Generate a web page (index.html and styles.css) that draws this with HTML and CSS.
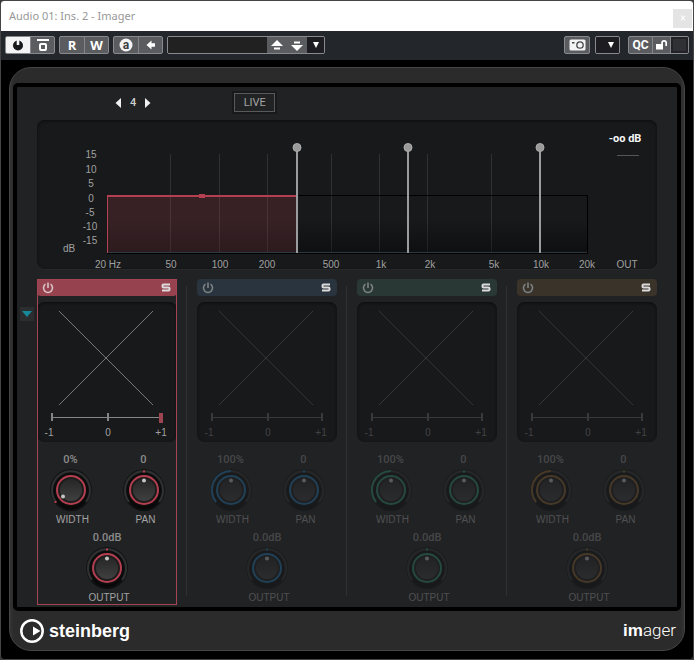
FILE: index.html
```html
<!DOCTYPE html>
<html lang="en">
<head>
<meta charset="utf-8">
<title>Audio 01: Ins. 2 - Imager</title>
<link rel="stylesheet" href="styles.css">
</head>
<body>
<div class="window">
  <header class="titlebar">
    <h1>Audio 01: Ins. 2 - Imager</h1>
    <button class="close" aria-label="Close"><svg width="8" height="8" viewBox="0 0 8 8"><path d="M2 1.500l4 5M6 1.500l-4 5" stroke="#fff" stroke-width="1.200"/></svg></button>
  </header>

  <div class="toolbar">
    <div class="group">
      <button class="tool on" aria-label="Activate"><svg width="14" height="14" viewBox="0 0 14 14"><circle cx="7" cy="7.500" r="5" fill="#17181a"/><path d="M7 0v7" stroke="#f4f4f4" stroke-width="2.600"/></svg></button>
      <button class="tool" aria-label="Bypass"><svg width="14" height="14" viewBox="0 0 14 14"><path d="M1 2h12" stroke="#fff" stroke-width="2"/><rect x="4" y="6" width="6" height="6" rx="1" fill="none" stroke="#fff" stroke-width="2"/></svg></button>
    </div>
    <div class="group">
      <button class="tool">R</button>
      <button class="tool">W</button>
    </div>
    <div class="group">
      <button class="tool" aria-label="Switch A/B"><svg width="14" height="14" viewBox="0 0 14 14"><circle cx="7" cy="7" r="6.500" fill="#f4f4f4"/><text x="7" y="11" class="ab">a</text></svg></button>
      <button class="tool" aria-label="Copy A to B"><svg width="12" height="12" viewBox="0 0 12 12"><path d="M1.500 6l5-4.500v2.700h3.500v3.600h-3.500v2.700z" fill="#fff"/></svg></button>
    </div>
    <div class="group preset">
      <input type="text" class="preset-name" aria-label="Preset">
      <button class="tool step" aria-label="Previous preset"><svg width="12" height="12" viewBox="0 0 12 12"><path d="M0 7l6-6 6 6z" fill="#fff"/><path d="M3 9.500h6" stroke="#fff" stroke-width="2"/></svg></button>
      <button class="tool step" aria-label="Next preset"><svg width="12" height="12" viewBox="0 0 12 12"><path d="M0 6l6 6 6-6z" fill="#fff"/><path d="M3 3.500h6" stroke="#fff" stroke-width="2"/></svg></button>
      <label class="drop small"><select aria-label="Preset menu"><option></option></select><svg width="8" height="8" viewBox="0 0 8 8"><path d="M1 1h6l-3 6z" fill="#fff"/></svg></label>
    </div>
    <span class="spacer"></span>
    <div class="group camera">
      <button class="tool" aria-label="Snapshot"><svg width="17" height="12" viewBox="0 0 17 12"><rect x="0.500" y="0.500" width="16" height="11" rx="1.500" fill="#f4f4f4"/><rect x="3" y="3" width="2.500" height="1.500" fill="#44464a"/><circle cx="11" cy="6" r="3.200" fill="none" stroke="#44464a" stroke-width="1.300"/></svg></button>
    </div>
    <div class="group functions">
      <label class="drop"><select aria-label="Functions"><option></option></select><svg width="8" height="8" viewBox="0 0 8 8"><path d="M1 1h6l-3 6z" fill="#fff"/></svg></label>
    </div>
    <div class="group">
      <button class="tool qc">QC</button>
      <button class="tool lock" aria-label="Unlock"><svg width="13" height="12" viewBox="0 0 13 12"><rect x="1" y="5" width="7" height="5.500" fill="#fff"/><path d="M7 5.500V4a2 2 0 0 1 4.200 0v3" fill="none" stroke="#fff" stroke-width="1.700"/></svg></button>
      <button class="tool blank" aria-label="Target"><span></span></button>
    </div>
  </div>

  <main class="shell">
    <div class="screen">
      <div class="controls">
        <div class="stepper">
          <button aria-label="Fewer bands"><svg width="6" height="10" viewBox="0 0 6 10"><path d="M6 0v10L0.500 5z" fill="#f0f0f0"/></svg></button>
          <output>4</output>
          <button aria-label="More bands"><svg width="6" height="10" viewBox="0 0 6 10"><path d="M0 0v10l5.500-5z" fill="#f0f0f0"/></svg></button>
        </div>
        <button class="live">LIVE</button>
      </div>

      <section class="spectrum" aria-label="Frequency bands">
        <svg viewBox="0 0 620 149">
          <defs>
            <linearGradient id="floor" x1="0" y1="0" x2="0" y2="1"><stop offset=".4" stop-color="#000" stop-opacity="0"/><stop offset="1" stop-color="#000" stop-opacity=".4"/></linearGradient>
          </defs>
          <path d="M133.500 34v99M182.500 34v99M230.500 34v99M294.500 34v99M342.500 34v99M390.500 34v99M454.500 34v99" stroke="#303133"/>
          <rect x="70" y="76" width="190" height="57" fill="#b54050" fill-opacity=".2"/>
          <rect x="70" y="76" width="190" height="57" fill="url(#floor)" opacity=".5"/>
          <rect x="260" y="76" width="290" height="57" fill="url(#floor)"/>
          <path d="M260 75.500h290.500v58" fill="none" stroke="#000"/>
          <path d="M70 133.500h481" stroke="#000"/>
          <path d="M70 132.500h480" stroke="#2c3842"/>
          <path d="M70.500 133v-58" stroke="#b04354"/>
          <path d="M70 76h190" stroke="#b43f50" stroke-width="2"/>
          <rect x="162" y="74" width="6" height="4" fill="#b43f50"/>
          <g stroke="#9c9c9c" stroke-width="2"><path d="M260 30v103M371 30v103M503 30v103"/></g>
          <g fill="#9a9a9a" stroke="#adadad"><circle cx="260" cy="27.500" r="4"/><circle cx="371" cy="27.500" r="4"/><circle cx="503" cy="27.500" r="4"/></g>
          <g class="axis">
            <text x="54" y="38">15</text><text x="54" y="53">10</text><text x="54" y="67">5</text><text x="54" y="82">0</text><text x="53" y="96">-5</text><text x="53" y="110">-10</text><text x="53" y="124">-15</text>
            <text x="32" y="132">dB</text>
            <text x="71" y="148">20 Hz</text><text x="134" y="148">50</text><text x="183" y="148">100</text><text x="230" y="148">200</text><text x="294" y="148">500</text><text x="344" y="148">1k</text><text x="393" y="148">2k</text><text x="457" y="148">5k</text><text x="504" y="148">10k</text><text x="550" y="148">20k</text><text x="590" y="148">OUT</text>
          </g>
          <text x="588" y="22" class="peak">-oo dB</text>
          <path d="M580 35.500h22" stroke="#555"/>
        </svg>
      </section>

      <div class="mixer">
        <button class="fold" aria-label="Toggle scopes"><svg width="10" height="6" viewBox="0 0 10 6"><path d="M0 0h10L5 6z" fill="#16899b"/></svg></button>
        <div class="bands" id="bands"></div>
      </div>
    </div>

    <footer class="brand">
      <div class="maker">
        <svg width="24" height="24" viewBox="0 0 24 24"><circle cx="12" cy="12" r="10.700" fill="none" stroke="#fff" stroke-width="2.500"/><path d="M13 7.500v9l7.500-4.500z" fill="#fff"/></svg>
        <span>steinberg</span>
      </div>
      <div class="product"><b>im</b>ager</div>
    </footer>
  </main>
</div>

<svg class="defs" aria-hidden="true">
  <defs>
    <radialGradient id="halo"><stop offset=".7" stop-color="#000" stop-opacity=".9"/><stop offset="1" stop-color="#000" stop-opacity="0"/></radialGradient>
    <linearGradient id="face" x1="0" y1="0" x2="0" y2="1"><stop offset="0" stop-color="#262626"/><stop offset="1" stop-color="#404040"/></linearGradient>
  </defs>
</svg>
<script src="bands.js"></script>
</body>
</html>
```
FILE: styles.css
```css
* { box-sizing: border-box; }
body { margin: 0; background: #3c3c3c; font-family: "Liberation Sans", Arial, sans-serif; font-size: 10px; line-height: 12px; color: #a3a3a3; }
button, input, select { font: inherit; color: inherit; margin: 0; padding: 0; border: 0; background: none; }
button { display: flex; align-items: center; justify-content: center; }
svg { display: block; }
.defs { position: absolute; width: 0; height: 0; }

.window { min-height: 100vh; padding-bottom: 7px; background: #000; border: 1px solid #454545; border-radius: 4px; overflow: hidden; }
.titlebar { display: flex; align-items: center; justify-content: space-between; height: 30px; padding: 0 1px 0 8px; background: #fff; }
.titlebar h1 { margin: 0; font: 400 11px/14px "Noto Sans", "Open Sans", sans-serif; color: #989898; }
.close { width: 19px; height: 19px; margin-top: 4px; background: #e4e4e4; }

.toolbar { display: flex; align-items: flex-start; gap: 4px; height: 29px; padding: 5px 4px 0; background: #23272b; }
.group { display: flex; height: 18px; border: 1px solid #88898c; border-radius: 2px; background: #5b5c60; overflow: hidden; }
.tool { width: 24px; color: #fff; font: 700 13px/16px "Open Sans", sans-serif; }
.tool + .tool { border-left: 1px solid #85868a; }
.tool.on { background: #f4f4f4; }
.tool.step { width: 20px; border: 0; }
.tool.qc { width: 23px; font: 700 12px/16px Roboto, sans-serif; }
.tool.lock { width: 18px; }
.tool.blank { width: 18px; background: #232327; }
.blank span { width: 13px; height: 12px; background: #303135; }
.ab { font: 700 12px Roboto, sans-serif; fill: #3c3e42; text-anchor: middle; }
.preset-name { width: 99px; background: #212121; }
.spacer { flex: 1; }
.camera { margin-right: 1px; }
.functions { margin-right: 4px; }
.drop { position: relative; display: flex; align-items: center; justify-content: flex-end; width: 23px; padding-right: 4px; background: #1d1d21; }
.drop.small { width: 17px; }
.drop select { position: absolute; inset: 0; width: 100%; height: 100%; appearance: none; }
.drop svg { position: relative; pointer-events: none; }

.shell { margin: 7px 8px 0; padding: 15px 3px 0; background: linear-gradient(90deg, #333 0, #2b2b2b 4px, #2b2b2b calc(100% - 4px), #333 100%); border: 1px solid #454545; border-radius: 22px; }
.screen { padding-bottom: 2px; background: #212224; border: 4px solid #000; border-radius: 5px; }
.controls { display: flex; align-items: center; height: 33px; padding: 0 20px 2px; font: 500 11px/12px Roboto, sans-serif; }
.stepper { display: flex; align-items: center; gap: 9px; margin-left: 78px; color: #d0d0d0; }
.live { width: 41px; height: 19px; margin-left: 83px; border: 1px solid #58595b; outline: 2px solid #18191b; font-weight: 400; color: #a4a4a4; }
.spectrum { margin: 0 20px; background: #18191b; border-radius: 8px; box-shadow: inset 0 1px 3px #0c0d0e, 0 1px 1px #292a2c; }
.spectrum svg { width: 100%; height: auto; }
.axis, .scale { font-size: 10px; text-anchor: middle; fill: #a0a0a0; }
.peak { font: 700 11px Roboto, sans-serif; text-anchor: middle; fill: #f6f6f6; }

.mixer { display: flex; align-items: flex-start; padding: 10px 20px 0 3px; }
.fold { width: 14px; height: 14px; margin: 28px 3px 0 0; background: #2c2d2f; }
.bands { flex: 1; display: grid; grid-template-columns: repeat(4, 1fr); gap: 20px; }
.band { position: relative; padding-bottom: 1px; }
.band.selected { outline: 1px solid #a54453; outline-offset: -1px; }
.band:not(:last-child)::after { content: ""; position: absolute; top: 7px; bottom: 9px; right: -10px; width: 1px; background: #303133; }
.band-head { display: flex; align-items: center; justify-content: space-between; height: 17px; padding: 0 6px 0 5px; border-radius: 4px; }
.red .band-head { background: #97434f; }
.blue .band-head { background: #2a343e; }
.green .band-head { background: #2a3835; }
.amber .band-head { background: #3a332a; }
.red { --accent: #b43f50; }
.blue { --accent: #2078b4; }
.green { --accent: #2f8f78; }
.amber { --accent: #8a622c; }
.power { stroke: #d8c4c6; }
.idle .power { stroke: #7d8285; }
.scope { margin-top: 6px; background: #18191b; border-radius: 8px; box-shadow: inset 0 1px 3px #0c0d0e; }
.scope svg { width: 100%; height: auto; }
.trace { stroke: #777; }
.ruler { stroke: #858585; fill: none; }
.pointer { fill: #9c4452; }
.idle .drawing { opacity: .3; }
.knobs { display: flex; justify-content: center; gap: 29px; margin-top: 12px; }
.knobs + .knobs { margin-top: 6px; }
.idle .knobs { opacity: .35; }
.knob { position: relative; display: flex; flex-direction: column; align-items: center; gap: 2px; width: 44px; }
.knob output { font: 500 11px/12px Roboto, sans-serif; color: #8c8c8c; white-space: nowrap; }
.knob label { padding-left: 4px; }
.knob input { position: absolute; top: 14px; left: 0; width: 44px; height: 44px; opacity: 0; }
.track { fill: none; stroke: #303232; stroke-width: 2; }
.ring, .level { fill: none; stroke: var(--accent); stroke-width: 2; }
.mark { fill: var(--accent); }

.brand { display: flex; align-items: center; justify-content: space-between; height: 39px; padding: 0 5px 0 7px; color: #fff; }
.maker { display: flex; align-items: center; gap: 5px; font: 700 18px/24px "Liberation Sans", Arial, sans-serif; }
.product { font: 300 17px/24px Roboto, sans-serif; }
.product b { font: 700 17px/24px "Liberation Sans", Arial, sans-serif; }
```
FILE: bands.js
```js
const bands = [
  { color: "red", selected: true, width: 0 },
  { color: "blue", width: 100 },
  { color: "green", width: 100 },
  { color: "amber", width: 100 }
];

function knob(id, name, text, min, max, value, low, level) {
  const dot = low ? [-8, 6.5] : [0, -9.5];
  const mark = low ? [-15.5, 12] : [0, -18.5];
  return `<div class="knob">
    <output for="${id}">${text}</output>
    <svg width="44" height="44" viewBox="-22 -22 44 44">
      <circle r="21" fill="#131415"/>
      <circle cy="3" r="19" fill="url(#halo)"/>
      <path class="track" d="M-15 12A19 19 0 1 1 15 12"/>
      <circle r="17" fill="#0c0c0d"/>
      ${level ? '<path class="level" d="M-15 12A19 19 0 0 1 0-19"/>' : `<rect class="mark" x="${mark[0] - 1}" y="${mark[1] - 1}" width="2" height="2"/>`}
      <circle r="14" fill="#1c1c1d"/>
      <circle r="11" fill="url(#face)"/>
      <circle class="ring" r="14"/>
      <circle cx="${dot[0]}" cy="${dot[1]}" r="2" fill="#c4c4c4"/>
    </svg>
    <input type="range" id="${id}" min="${min}" max="${max}" value="${value}">
    <label for="${id}">${name}</label>
  </div>`;
}

document.getElementById("bands").innerHTML = bands.map((b, i) => `
  <section class="band ${b.color} ${b.selected ? "selected" : "idle"}">
    <div class="band-head">
      <button aria-label="Band power"><svg class="power" width="12" height="12" viewBox="0 0 12 12" fill="none" stroke-width="1.6"><path d="M3.500 2.200a4.500 4.500 0 1 0 5 0M6 0.500v5.500"/></svg></button>
      <button aria-label="Solo"><svg width="10" height="9" viewBox="0 0 10 9"><path d="M9 1.500H2.500Q1.500 1.500 1.500 2.500V3.500Q1.500 4.500 2.500 4.500H7.500Q8.500 4.500 8.500 5.500V6.500Q8.500 7.500 7.500 7.500H1" fill="none" stroke="#dcdcdc" stroke-width="2"/></svg></button>
    </div>
    <div class="scope"><svg viewBox="0 0 140 140"><g class="drawing">
      <path class="trace" d="M22 9L116 103M22 103L116 9"/>
      <path class="ruler" d="M15 115.500H124"/>
      <path class="ruler" stroke-width="2" d="M15 111v8M71 111v8${b.selected ? "" : "M125 111v8"}"/>
      ${b.selected ? '<rect class="pointer" x="122" y="111" width="4" height="10"/>' : ""}
      <g class="scale"><text x="12" y="134">-1</text><text x="71" y="134">0</text><text x="124" y="134">+1</text></g>
    </g></svg></div>
    <div class="knobs">
      ${knob("width" + i, "WIDTH", b.width + "%", 0, 200, b.width, b.width === 0, b.width > 0)}
      ${knob("pan" + i, "PAN", "0", -100, 100, 0)}
    </div>
    <div class="knobs">${knob("output" + i, "OUTPUT", "0.0dB", -24, 24, 0)}</div>
  </section>`).join("");
```
